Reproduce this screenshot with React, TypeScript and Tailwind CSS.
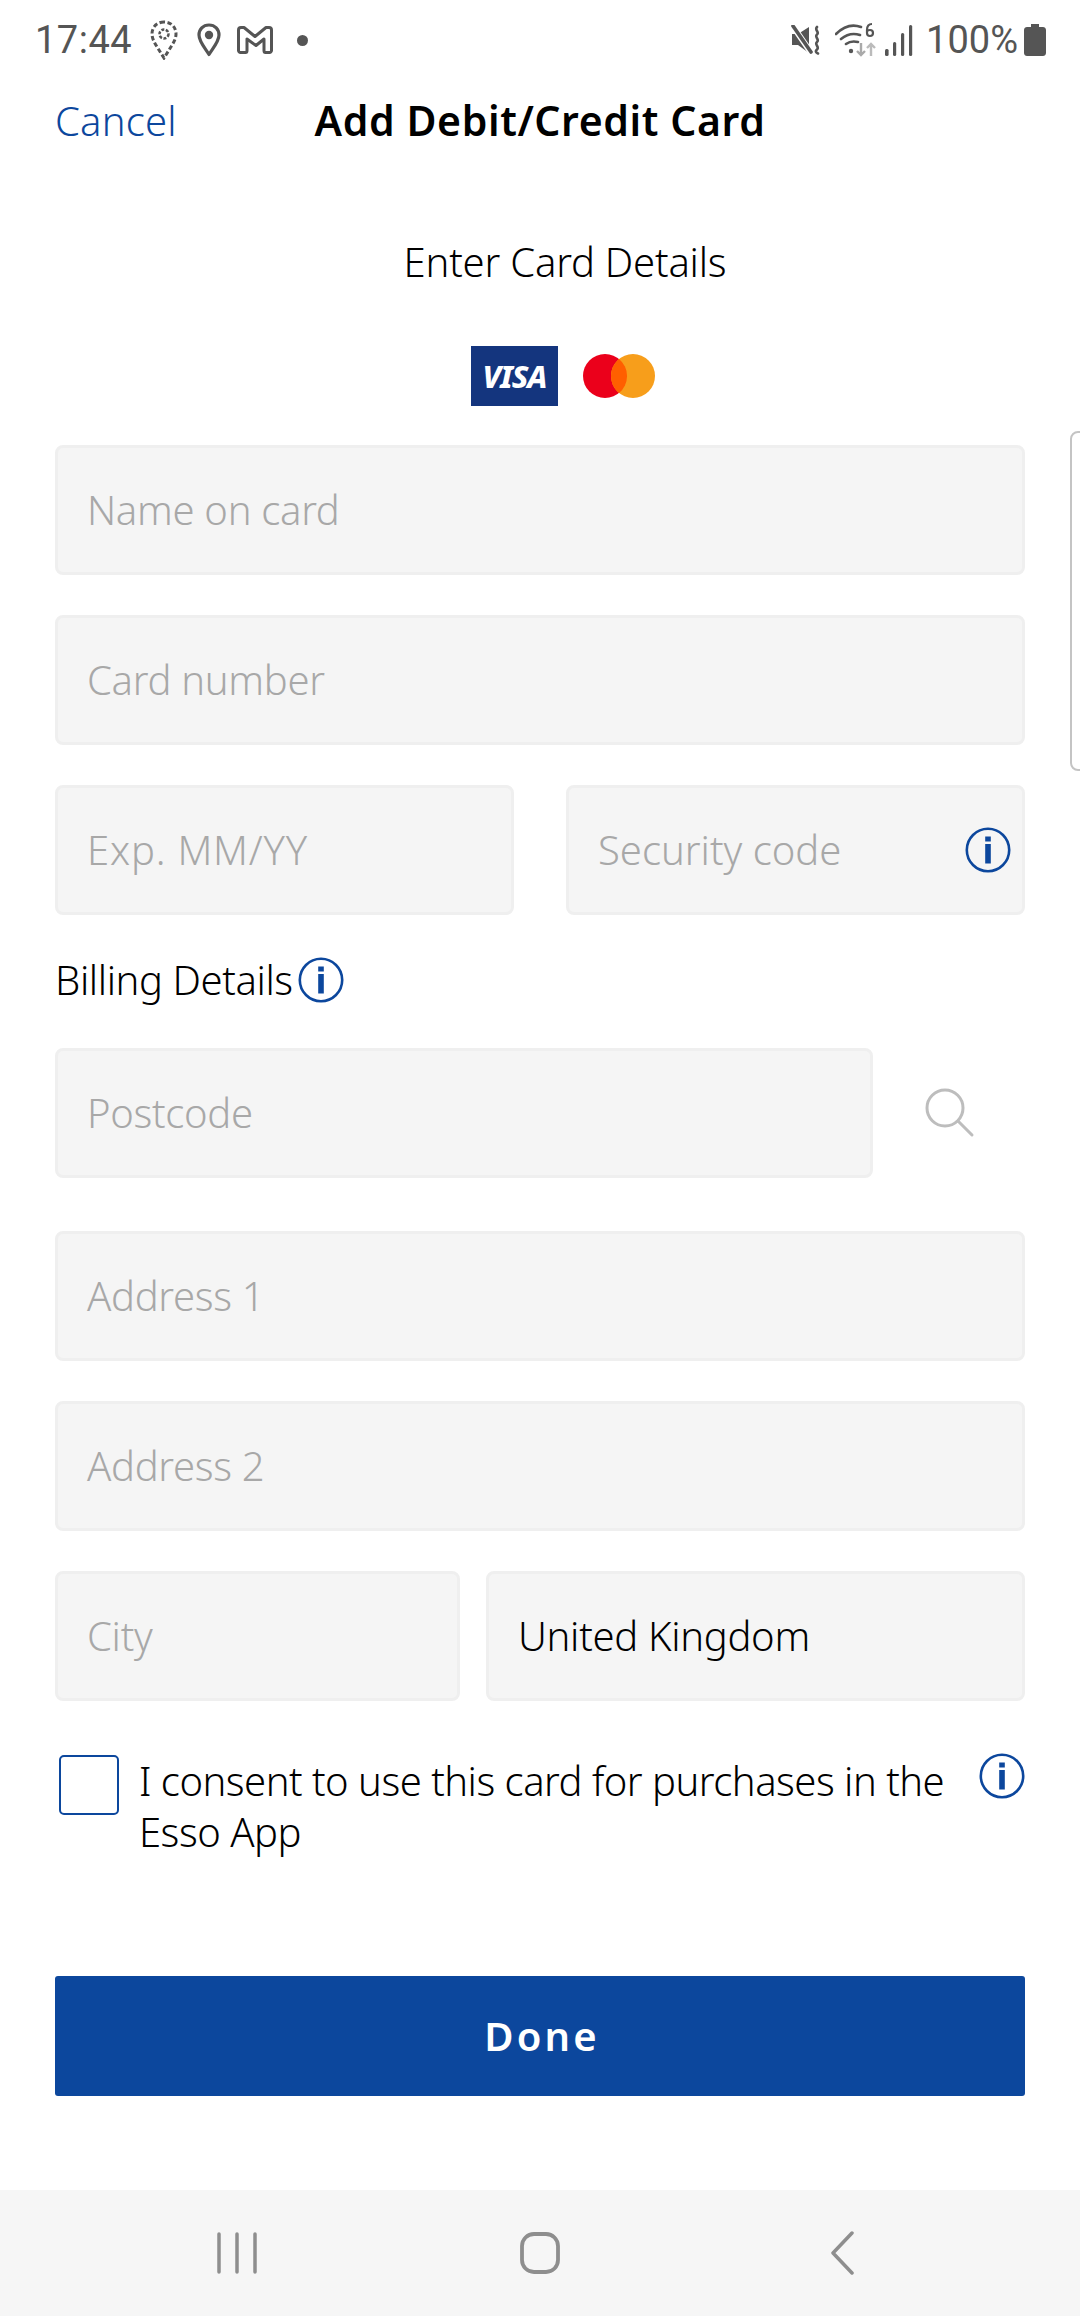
const BLUE = "#0c479d";

const InfoIcon = ({ size = 46, className = "" }: { size?: number; className?: string }) => (
  <svg width={size} height={size} viewBox="0 0 46 46" className={`shrink-0 ${className}`}>
    <circle cx="23" cy="23" r="21.2" fill="none" stroke={BLUE} strokeWidth="2.6" />
    <rect x="20.2" y="9.5" width="5.6" height="5" fill={BLUE} />
    <rect x="20.2" y="17" width="5.6" height="19.5" fill={BLUE} />
  </svg>
);

const Field = ({ label, className = "", labelClass = "tracking-[-0.3px]", value, children }: { label: string; className?: string; labelClass?: string; value?: boolean; children?: React.ReactNode }) => (
  <div
    className={`h-[130px] flex items-center justify-between pl-[29px] pr-[11px] bg-[#f5f5f5] border-[3px] border-[#efefef] rounded-[8px] text-[40px] font-light ${value ? "text-black" : "text-[#a8a8a8]"} ${className}`}
  >
    <span className={labelClass}>{label}</span>
    {children}
  </div>
);

const StatusBar = () => (
  <div className="h-[80px] flex items-center justify-between pl-[35px] pr-[34px] text-[#555555] font-['Roboto',sans-serif] text-[38px]">
    <div className="flex items-center">
      <span className="tracking-[0.5px]">17:44</span>
      <svg width="28" height="40" viewBox="0 0 28 40" className="ml-[18px]">
        <path d="M14 2C7 2 2 7 2 14c0 4 2 8 4.500 12L14 38l7.500-12c2.500-4 4.500-8 4.500-12C26 7 21 2 14 2z" fill="none" stroke="#555" strokeWidth="3" strokeDasharray="4.500 2.500" />
        <circle cx="14" cy="14" r="4.500" fill="none" stroke="#555" strokeWidth="2.500" strokeDasharray="3 1.500" />
      </svg>
      <svg width="24" height="34" viewBox="0 0 24 34" className="ml-[19px]">
        <path d="M12 2C6 2 2 6.500 2 12c0 6.500 6 13 10 19.500C16 25 22 18.500 22 12 22 6.500 18 2 12 2z" fill="none" stroke="#555" strokeWidth="3.200" strokeLinejoin="round" />
        <circle cx="12" cy="12" r="4.200" fill="#555" />
      </svg>
      <svg width="36" height="28" viewBox="0 0 36 28" className="ml-[16px]">
        <path d="M1.500 4C1.500 2.500 2.500 1.500 4 1.500h3L18 10.500 29 1.500h3c1.500 0 2.500 1 2.500 2.500v20.500c0 1-1 2-2 2h-4c-1 0-1.500-1-1.500-2V13l-8 6.500L10 13v11.500c0 1-.5 2-1.500 2h-5c-1 0-2-1-2-2z" fill="none" stroke="#555" strokeWidth="3" strokeLinejoin="round" />
      </svg>
      <span className="ml-[24px] w-[11px] h-[11px] rounded-full bg-[#555555]" />
    </div>
    <div className="flex items-center">
      <svg width="30" height="30" viewBox="0 0 30 30">
        <path d="M1 9h6l11-7v26L7 20H1z" fill="#555" />
        <path d="M1 0l20 29" stroke="#fff" strokeWidth="6" />
        <path d="M2 1l18 26" stroke="#555" strokeWidth="3.600" strokeLinecap="round" />
        <path d="M26 2c-3 3 3 5 0 7.500s3 5 0 7.500 3 5 0 7.500 1 4 1 4" fill="none" stroke="#555" strokeWidth="2.600" strokeLinecap="round" />
      </svg>
      <svg width="42" height="36" viewBox="0 0 42 36" className="ml-[14px]">
        <path d="M1 12C9 4 18 2 26 5M6 17c6-5 13-6 19-4M11 22c4-3 8-3 12-2" fill="none" stroke="#555" strokeWidth="2.600" strokeLinecap="round" />
        <circle cx="16" cy="29" r="2.200" fill="#555" />
        <path d="M26 21v12m-4-4l4 4 4-4" fill="none" stroke="#aaa" strokeWidth="2.400" />
        <path d="M36 34V22m-4 4l4-4 4 4" fill="none" stroke="#bbb" strokeWidth="2.400" />
        <path d="M37 2c-3 0-5 2-5 6v3c0 2 1 3 3 3s3-1 3-3-1-3-3-3-3 1-3 2" fill="none" stroke="#555" strokeWidth="2.200" />
      </svg>
      <svg width="30" height="32" viewBox="0 0 30 32" className="ml-[7px]">
        <rect x="1" y="25" width="3.600" height="7" rx="1.500" fill="#555" />
        <rect x="9" y="18" width="3.200" height="14" rx="1.500" fill="#555" />
        <rect x="17" y="9" width="3.200" height="23" rx="1.500" fill="#555" />
        <rect x="25" y="1" width="3.200" height="31" rx="1.500" fill="#555" />
      </svg>
      <span className="ml-[12px]">100%</span>
      <svg width="22" height="32" viewBox="0 0 22 32" className="ml-[6px]">
        <path d="M7 0h8v3h4c1.500 0 3 1.300 3 3v23c0 1.700-1.500 3-3 3H3c-1.500 0-3-1.300-3-3V6c0-1.700 1.500-3 3-3h4z" fill="#555" />
      </svg>
    </div>
  </div>
);

const NavBar = () => (
  <div className="h-[126px] bg-[#f6f6f6] flex items-center justify-between pl-[217px] pr-[226px]">
    <svg width="40" height="42" viewBox="0 0 40 42">
      <path d="M2 2v38M20 2v38M38 2v38" stroke="#8e8e8e" strokeWidth="3.500" strokeLinecap="round" />
    </svg>
    <svg width="40" height="42" viewBox="0 0 40 42" className="mr-[8px]">
      <rect x="2" y="2" width="36" height="38" rx="12" fill="none" stroke="#8e8e8e" strokeWidth="3.800" />
    </svg>
    <svg width="24" height="44" viewBox="0 0 24 44">
      <path d="M22 2L3 22l19 20" fill="none" stroke="#8e8e8e" strokeWidth="3.500" strokeLinecap="round" strokeLinejoin="round" />
    </svg>
  </div>
);

export default function App() {
  return (
    <div className="relative w-[1080px] h-[2316px] bg-white overflow-hidden flex flex-col font-['Noto_Sans',sans-serif]">
      <StatusBar />

      <div className="h-[82px] flex items-center justify-center relative">
        <a className="absolute left-[55px] text-[40px] font-light tracking-[0.2px] text-[#0c479d]">Cancel</a>
        <h1 className="text-[41px] font-semibold tracking-[0.6px] text-black">Add Debit/Credit Card</h1>
      </div>

      <main className="flex-1 flex flex-col px-[55px]">
        <p className="mt-[70px] h-[60px] leading-[60px] text-center text-[40px] font-light tracking-[-0.2px] text-black pl-[50px]">Enter Card Details</p>

        <div className="mt-[54px] h-[60px] flex items-center justify-center gap-[25px] pl-[46px]">
          <div className="w-[87px] h-[60px] bg-[#14357e] flex items-center justify-center italic font-extrabold text-white text-[31px] tracking-[-1px]">VISA</div>
          <svg width="72" height="44" viewBox="0 0 72 44">
            <circle cx="22" cy="22" r="22" fill="#eb001b" />
            <circle cx="50" cy="22" r="22" fill="#f79e1b" />
            <path d="M36 5a22 22 0 0 1 0 34 22 22 0 0 1 0-34z" fill="#ff5f00" />
          </svg>
        </div>

        <div className="mt-[39px] flex flex-col gap-[40px]">
          <Field label="Name on card" />
          <Field label="Card number" />
          <div className="flex gap-[52px]">
            <Field label="Exp. MM/YY" labelClass="tracking-[0.8px]" className="flex-1" />
            <Field label="Security code" labelClass="tracking-[0px]" className="flex-1">
              <InfoIcon />
            </Field>
          </div>
        </div>

        <div className="h-[133px] flex items-center pb-[4px]">
          <span className="text-[40px] font-light tracking-[-0.4px] text-black">Billing Details</span>
          <InfoIcon className="ml-[5px]" />
        </div>

        <div className="flex items-center">
          <Field label="Postcode" className="w-[818px]" />
          <svg width="50" height="50" viewBox="0 0 50 50" className="ml-[52px]">
            <circle cx="20" cy="20" r="18" fill="none" stroke="#bdbdbd" strokeWidth="3" />
            <path d="M33 33l14 14" stroke="#bdbdbd" strokeWidth="3" strokeLinecap="round" />
          </svg>
        </div>

        <div className="mt-[53px] flex flex-col gap-[40px]">
          <Field label="Address 1" />
          <Field label="Address 2" />
          <div className="flex gap-[26px]">
            <Field label="City" className="w-[405px]" />
            <Field label="United Kingdom" value className="flex-1" />
          </div>
        </div>

        <div className="mt-[54px] flex items-start">
          <div className="w-[60px] h-[60px] ml-[4px] shrink-0 border-[2.500px] border-[#0c479d] rounded-[5px]" />
          <p className="ml-[20px] flex-1 text-[40px] leading-[51px] font-light tracking-[-0.5px] text-black">
            I consent to use this card for purchases in the Esso App
          </p>
          <InfoIcon className="-mt-[2px]" />
        </div>

        <button className="mt-[119px] h-[120px] bg-[#0c479d] rounded-[3px] pl-[4px] text-white text-[40px] font-semibold tracking-[3.200px]">Done</button>
      </main>

      <NavBar />

      <div className="absolute right-[-8px] top-[431px] w-[18px] h-[340px] border-[2px] border-[#c4c4c4] rounded-[8px]" />
    </div>
  );
}
